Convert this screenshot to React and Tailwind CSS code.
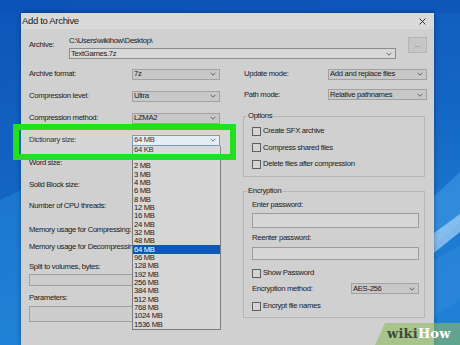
const SIZES = [
  "64 KB", "1 MB", "2 MB", "3 MB", "4 MB", "6 MB", "8 MB", "12 MB", "16 MB", "24 MB", "32 MB",
  "48 MB", "64 MB", "96 MB", "128 MB", "192 MB", "256 MB", "384 MB", "512 MB", "768 MB", "1024 MB", "1536 MB",
];

function Chevron() {
  return (
    <svg width="6" height="4" viewBox="0 0 6 4" className="shrink-0">
      <path d="M0.6 0.8 L3 3.2 L5.4 0.8" fill="none" stroke="#4a4a4a" strokeWidth="0.8" />
    </svg>
  );
}

function Select({ value, className = "" }) {
  return (
    <div className={`flex h-[11px] items-center justify-between border border-[#a2a2a2] bg-[#c8c8c8] pl-[1px] pr-[3px] ${className}`}>
      <span>{value}</span>
      <Chevron />
    </div>
  );
}

function Check({ label }) {
  return (
    <div className="flex h-[9px] items-center gap-[2px]">
      <span className="h-[9px] w-[9px] border border-[#5e5e5e] bg-[#d4d4d4]" />
      <span>{label}</span>
    </div>
  );
}

function Row({ label, h, children }) {
  return (
    <div className={`flex items-center ${h}`}>
      <span className="w-[103px] shrink-0 whitespace-nowrap">{label}</span>
      {children}
    </div>
  );
}

function Wallpaper() {
  return (
    <svg className="absolute inset-0" width="460" height="345" viewBox="0 0 460 345">
      <defs>
        <linearGradient id="wp" x1="0" y1="0" x2="0.3" y2="1">
          <stop offset="0" stopColor="#0d55ba" />
          <stop offset="0.55" stopColor="#1466c4" />
          <stop offset="1" stopColor="#1f80d6" />
        </linearGradient>
      </defs>
      <rect width="460" height="345" fill="url(#wp)" />
      <rect x="0" y="0" width="460" height="13" fill="#0b4fb6" opacity="0.5" />
      <polygon points="430,200 460,172 460,222 430,250" fill="#3a92e0" opacity="0.75" />
      <polygon points="430,236 460,214 460,232 430,256" fill="#a6d3f6" opacity="0.7" />
      <polygon points="430,262 460,246 460,300 430,318" fill="#2b86d9" opacity="0.8" />
      <polygon points="0,200 21,190 21,345 0,345" fill="#2389da" opacity="0.5" />
    </svg>
  );
}

export default function App() {
  return (
    <div className="relative h-[345px] w-[460px] overflow-hidden font-['Liberation_Sans',Arial,sans-serif] text-[7.7px] leading-[8px] tracking-[-0.32px] text-[#1a1a1a]">
      <Wallpaper />

      <div className="relative pl-[21px] pt-[13px]">
        <div className="flex h-[340px] w-[413px] flex-col bg-[#d0d0d0] shadow-[0_0_5px_rgba(0,0,0,0.35)]">
          {/* title bar */}
          <div className="flex h-[16px] shrink-0 items-center justify-between bg-[#d9d9d9] pl-[1px] pr-[8px] text-[9.5px]">
            <span>Add to Archive</span>
            <svg width="7" height="7" viewBox="0 0 7 7">
              <path d="M0.5 0.5 L6.5 6.5 M6.5 0.5 L0.5 6.5" stroke="#222" strokeWidth="0.9" />
            </svg>
          </div>

          {/* archive path */}
          <div className="flex h-[34px] shrink-0 pl-[8px] pt-[8px]">
            <span className="mt-[4px] w-[40px] shrink-0">Archive:</span>
            <div className="flex flex-col">
              <span className="h-[8px]">C:\Users\wikihow\Desktop\</span>
              <div className="mt-[3px] flex h-[11px] w-[327px] items-center justify-between border border-[#8c8c8c] bg-[#d8d8d8] pl-[1px] pr-[3px]">
                <span>TextGames.7z</span>
                <Chevron />
              </div>
            </div>
            <div className="ml-[12px] flex h-[16px] w-[19px] items-center justify-center border border-[#b4b4b4] bg-[#c6c6c6] text-[#777]">
              ...
            </div>
          </div>

          <div className="flex pl-[8px]">
            {/* left column */}
            <div className="flex w-[214px] shrink-0 flex-col">
              <Row label="Archive format:" h="h-[22px]">
                <Select value="7z" className="w-[88px]" />
              </Row>
              <Row label="Compression level:" h="h-[22px]">
                <Select value="Ultra" className="w-[88px]" />
              </Row>
              <Row label="Compression method:" h="h-[22px]">
                <Select value="LZMA2" className="w-[88px]" />
              </Row>
              <Row label="Dictionary size:" h="h-[22px]">
                <div className="relative z-10">
                  <div className="flex h-[11px] w-[88px] items-center justify-between border border-[#6c8fb8] bg-[#e2ecf6] pl-[1px] pr-[3px]">
                    <span>64 MB</span>
                    <Chevron />
                  </div>
                  <div className="absolute left-0 top-full w-[89px] border-x border-b border-[#7c7c7c] bg-[#d6d6d6]">
                    {SIZES.map((s, i) => (
                      <div
                        key={s}
                        className={`flex h-[8.33px] items-center pl-[1px] ${i === 12 ? "bg-[#0e59b4] text-white" : ""}`}
                      >
                        {s}
                      </div>
                    ))}
                  </div>
                </div>
              </Row>
              <Row label="Word size:" h="h-[24px]" />
              <Row label="Solid Block size:" h="h-[20px]" />
              <Row label="Number of CPU threads:" h="h-[22px]" />
              <div className="flex h-[25px] items-center whitespace-nowrap">Memory usage for Compressing:</div>
              <div className="flex h-[10px] items-center whitespace-nowrap">Memory usage for Decompressing:</div>
              <div className="mt-[10px] flex h-[10px] items-center">Split to volumes, bytes:</div>
              <div className="mt-[2px] h-[12px] w-[191px] border border-[#a0a0a0] bg-[#cdcdcd]" />
              <div className="mt-[7px] flex h-[10px] items-center">Parameters:</div>
              <div className="mt-[3px] h-[16px] w-[191px] border border-[#a0a0a0] bg-[#cdcdcd]" />
            </div>

            {/* right column */}
            <div className="flex w-[184px] shrink-0 flex-col">
              <div className="flex h-[22px] items-center justify-between pl-[1px]">
                <span>Update mode:</span>
                <Select value="Add and replace files" className="w-[99px]" />
              </div>
              <div className="flex h-[19px] items-center justify-between pl-[1px]">
                <span>Path mode:</span>
                <Select value="Relative pathnames" className="w-[99px]" />
              </div>

              <fieldset className="mt-[8px] flex h-[65px] w-[182px] flex-col gap-[7.5px] border border-[#b6b6b6] pb-0 pl-[8px] pr-[5px] pt-[6.5px]">
                <legend className="-ml-[5px] h-[8px] px-[1px] leading-[8px]">Options</legend>
                <Check label="Create SFX archive" />
                <Check label="Compress shared files" />
                <Check label="Delete files after compression" />
              </fieldset>

              <fieldset className="mt-[10px] flex h-[131px] w-[182px] flex-col border border-[#b6b6b6] pl-[8px] pr-[5px]">
                <legend className="-ml-[5px] h-[8px] px-[1px] leading-[8px]">Encryption</legend>
                <span className="mt-[6px] h-[8px]">Enter password:</span>
                <div className="mt-[4px] h-[15px] w-full border border-[#9c9c9c] bg-[#d6d6d6]" />
                <span className="mt-[6px] h-[8px]">Reenter password:</span>
                <div className="mt-[5px] h-[13px] w-full border border-[#9c9c9c] bg-[#d6d6d6]" />
                <div className="mt-[8.5px]">
                  <Check label="Show Password" />
                </div>
                <div className="mt-[5.5px] flex h-[11px] items-center justify-between">
                  <span>Encryption method:</span>
                  <Select value="AES-256" className="w-[68px]" />
                </div>
                <div className="mt-[7.5px]">
                  <Check label="Encrypt file names" />
                </div>
              </fieldset>
            </div>
          </div>
        </div>
      </div>

      {/* highlight box */}
      <div className="absolute left-[13px] top-[124px] z-20 h-[36px] w-[223px] border-[6px] border-[#22e01e] bg-white/10" />

      {/* watermark */}
      <div className="absolute left-[375px] top-[323px] z-20 flex h-[22px] w-[85px] items-center bg-[rgba(141,187,94,0.6)] pl-[12px] font-['DejaVu_Serif',serif] text-[13px] font-bold tracking-[0.2px] [clip-path:polygon(10px_0,100%_0,100%_100%,0_100%)]">
        <span className="text-[#3e4a38]">wiki</span>
        <span className="text-white">How</span>
      </div>
    </div>
  );
}
